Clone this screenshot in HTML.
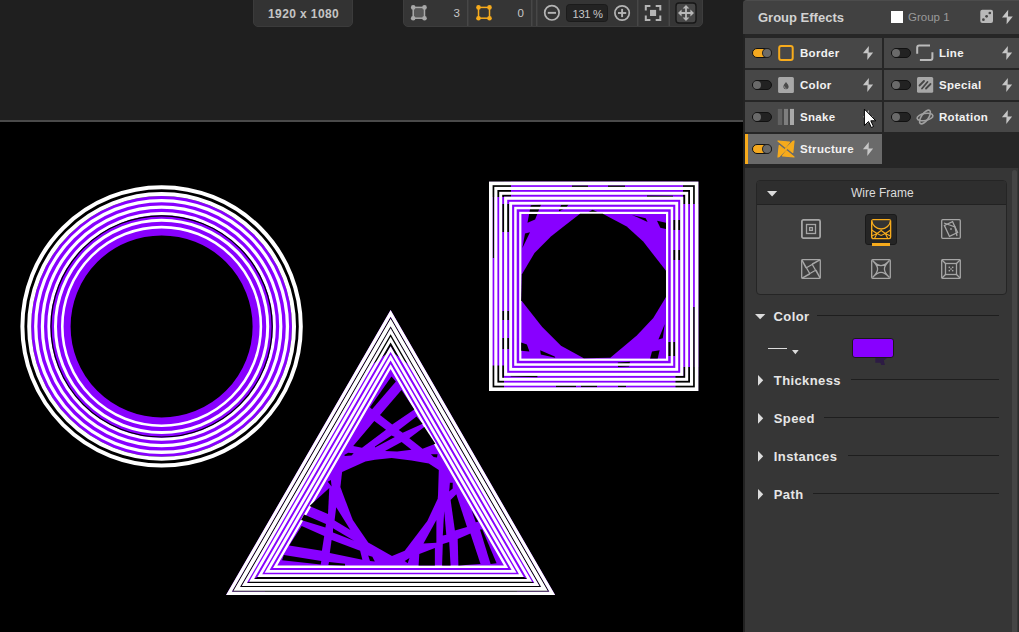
<!DOCTYPE html>
<html><head><meta charset="utf-8">
<style>
*{margin:0;padding:0;box-sizing:border-box}
html,body{width:1019px;height:632px;overflow:hidden;background:#1f1f1f;font-family:"Liberation Sans",sans-serif}
.a{position:absolute}
svg{position:absolute;overflow:visible}
#sep{left:0;top:120px;width:743px;height:2px;background:#4a4a4a}
#pill{left:253px;top:-5px;width:100px;height:32px;background:#333;border-radius:5px;border:1px solid #3b3b3b}
#pill span{position:absolute;left:14px;top:11px;font-size:12px;font-weight:bold;color:#c4c4c4;letter-spacing:0.4px}
#tb{left:403px;top:-5px;width:300px;height:32px;background:#353535;border-radius:5px;border:1px solid #3d3d3d}
.num{position:absolute;font-size:11.5px;color:#c8c8c8;line-height:1}
#lstrip{left:743px;top:0;width:2px;height:632px;background:#222}
#panel{left:745px;top:168px;width:274px;height:464px;background:#363636}
#hdr{left:743px;top:0;width:276px;height:34px;background:#414141;border-top:1px solid #4c4c4c;border-radius:4px 0 0 0}
#hdr .t{position:absolute;left:15px;top:8.7px;font-size:13px;font-weight:bold;color:#d2d2d2}
#hdr .g{position:absolute;left:165px;top:9.5px;font-size:11.5px;color:#9a9a9a}
#grid{left:745px;top:34px;width:274px;height:134px;background:#262626}
.row{position:absolute;height:30px;background:#474747}
.lbl{position:absolute;left:55px;top:8.7px;font-size:11.5px;font-weight:bold;color:#f2f2f2;letter-spacing:0.3px}
.tog{position:absolute;left:7px;top:10px;width:20px;height:10px;border-radius:5px;background:#222;border:1px solid #111}
.tog.on{background:#f5a91f}
.tog i{position:absolute;top:0px;width:8px;height:8px;border-radius:50%;background:#6a6a6a}
.tog.on i{left:10px;box-shadow:0 0 0 1px #222}
.tog.off i{left:0px}
.ic{left:32px;top:6px}
.bolt{left:116px;top:6px}
.sect{position:absolute;left:0;font-size:13px;font-weight:bold;color:#e6e6e6;letter-spacing:0.4px}
.hl{position:absolute;height:1px;background:#1e1e1e}
</style></head><body>
<svg class="a" style="left:0;top:0" width="743" height="632" viewBox="0 0 743 632">
<rect x="0" y="122" width="743" height="510" fill="#000"/>
<circle cx="161.6" cy="326.4" r="110.70" fill="none" stroke="#8800ff" stroke-width="39.40"/>
<circle cx="161.6" cy="326.4" r="139.20" fill="none" stroke="#fff" stroke-width="4.00"/>
<circle cx="161.6" cy="326.4" r="132.40" fill="none" stroke="#fff" stroke-width="4.00"/>
<circle cx="161.6" cy="326.4" r="125.85" fill="none" stroke="#fff" stroke-width="3.30"/>
<circle cx="161.6" cy="326.4" r="119.20" fill="none" stroke="#fff" stroke-width="3.20"/>
<circle cx="161.6" cy="326.4" r="112.80" fill="none" stroke="#fff" stroke-width="3.00"/>
<circle cx="161.6" cy="326.4" r="106.10" fill="none" stroke="#fff" stroke-width="3.00"/>
<circle cx="161.6" cy="326.4" r="99.30" fill="none" stroke="#fff" stroke-width="2.60"/>
<circle cx="161.6" cy="326.4" r="110.6" fill="none" stroke="#000" stroke-width="1.2"/>
<rect x="489.00" y="181.60" width="209.40" height="209.40" fill="#8800ff"/>
<rect x="489" y="181.6" width="22.0" height="15.1" fill="#000"/>
<rect x="489" y="181.6" width="15.0" height="15.4" fill="#000"/>
<rect x="683" y="181.6" width="15.4" height="22.4" fill="#000"/>
<rect x="675.5" y="375.8" width="22.9" height="15.1" fill="#000"/>
<rect x="683.3" y="367" width="15.1" height="23.9" fill="#000"/>
<rect x="489" y="375.8" width="15.0" height="15.1" fill="#000"/>
<rect x="489" y="365.5" width="15.0" height="25.4" fill="#000"/>
<rect x="502.2" y="204" width="7.0" height="28.0" fill="#000"/>
<rect x="502.2" y="311" width="7.0" height="9.0" fill="#000"/>
<rect x="502.2" y="338" width="7.0" height="11.0" fill="#000"/>
<rect x="673.2" y="220" width="7.0" height="10.0" fill="#000"/>
<rect x="673.2" y="250" width="7.0" height="10.0" fill="#000"/>
<rect x="668.2" y="342" width="7.1" height="14.0" fill="#000"/>
<rect x="693.1" y="307" width="1.7" height="68.0" fill="#000"/>
<rect x="492.6" y="182" width="1.7" height="76.0" fill="#000"/>
<polygon fill="#000" points="530.8,205.3 541.1,204.3 535.1,219.5 527.5,222.7"/>
<polygon fill="#000" points="561.2,204.8 568.6,204.3 566.1,207.8 559.3,211.2 558.8,210.7"/>
<polygon fill="#000" points="587.7,212.5 592.6,209.7 598.5,212.5"/>
<polygon fill="#000" points="647.0,195.5 673.0,195.8 673.0,197.5 647.0,197.2"/>
<polygon fill="#000" points="572.0,185.4 588.0,185.4 588.0,187.2 572.0,187.2"/>
<polygon fill="#000" points="608.0,185.4 625.0,185.4 625.0,187.2 608.0,187.2"/>
<polygon fill="#000" points="556.0,385.3 576.0,385.3 576.0,387.2 556.0,387.2"/>
<polygon fill="#000" points="581.0,385.3 597.0,385.3 597.0,387.2 581.0,387.2"/>
<polygon fill="#000" points="618.0,385.3 626.0,385.3 626.0,387.2 618.0,387.2"/>
<polygon fill="#000" points="510.6,374.5 537.4,375.5 537.4,377.2 510.6,376.4"/>
<polygon fill="#000" points="617.8,362.5 630.0,361.8 629.0,366.5 618.0,367.0"/>
<rect x="490.80" y="183.40" width="205.80" height="205.80" fill="none" stroke="#fff" stroke-width="3.60"/>
<rect x="495.85" y="188.45" width="195.70" height="195.70" fill="none" stroke="#fff" stroke-width="3.10"/>
<rect x="500.70" y="193.30" width="186.00" height="186.00" fill="none" stroke="#fff" stroke-width="3.00"/>
<rect x="505.65" y="198.25" width="176.10" height="176.10" fill="none" stroke="#fff" stroke-width="3.10"/>
<rect x="510.65" y="203.25" width="166.10" height="166.10" fill="none" stroke="#fff" stroke-width="2.90"/>
<rect x="515.45" y="208.05" width="156.50" height="156.50" fill="none" stroke="#fff" stroke-width="2.50"/>
<rect x="520.30" y="212.90" width="146.80" height="146.80" fill="none" stroke="#fff" stroke-width="2.20"/>
<polygon fill="#000" points="580.0,213.8 602.7,213.8 626.7,226.5 643.2,241.6 666.0,270.8 666.0,297.0 653.3,317.9 636.8,335.6 610.3,357.8 583.8,358.2 561.0,345.8 542.0,326.8 521.2,300.2 521.8,274.6 534.5,253.0 550.9,236.6 563.6,226.5"/>
<polygon fill="#000" points="525.0,233.4 530.0,232.2 522.4,248.0"/>
<polygon fill="#000" points="631.8,215.0 645.7,218.2 647.6,222.0 636.8,217.0"/>
<polygon fill="#000" points="657.0,220.8 666.0,222.7 666.0,229.0 660.3,227.7"/>
<polygon fill="#000" points="664.7,324.2 658.4,339.4 662.8,338.2"/>
<polygon fill="#000" points="652.0,351.5 659.6,350.2 657.7,358.4 650.1,358.4"/>
<polygon fill="#000" points="521.2,342.6 526.9,344.5 529.4,351.5 521.2,350.8"/>
<polygon fill="#000" points="540.2,350.2 554.7,356.5 555.3,357.8 540.8,354.6"/>
<polygon fill="#8800ff" points="390.60,310.10 555.14,595.10 226.06,595.10"/>
<polygon fill="#000" points="390.60,316.70 549.43,591.80 539.38,586.00 390.60,328.30"/>
<polygon fill="#000" points="390.60,316.70 231.77,591.80 241.82,586.00 390.60,328.30"/>
<polygon fill="#000" points="549.43,591.80 265.00,591.80 265.00,586.00 539.38,586.00"/>
<polygon fill="#000" points="231.77,591.80 517.00,591.80 517.00,586.00 241.82,586.00"/>
<polygon fill="#000" points="390.60,328.30 413.52,368.00 395.05,354.00 390.60,346.30 386.15,354.00 367.68,368.00"/>
<polygon fill="#000" points="539.38,586.00 262.00,586.00 262.00,577.00 523.79,577.00"/>
<polygon fill="#000" points="241.82,586.00 520.00,586.00 520.00,577.00 257.41,577.00"/>
<polygon fill="none" stroke="#fff" stroke-linejoin="miter" stroke-miterlimit="10" stroke-width="3.30" points="390.60,313.40 552.29,593.45 228.91,593.45"/>
<polygon fill="none" stroke="#fff" stroke-linejoin="miter" stroke-miterlimit="10" stroke-width="3.80" points="390.60,322.50 544.41,588.90 236.79,588.90"/>
<polygon fill="none" stroke="#fff" stroke-linejoin="miter" stroke-miterlimit="10" stroke-width="2.90" points="390.60,331.20 536.87,584.55 244.33,584.55"/>
<polygon fill="none" stroke="#fff" stroke-linejoin="miter" stroke-miterlimit="10" stroke-width="2.90" points="390.60,339.60 529.60,580.35 251.60,580.35"/>
<polygon fill="none" stroke="#fff" stroke-linejoin="miter" stroke-miterlimit="10" stroke-width="2.80" points="390.60,349.10 521.37,575.60 259.83,575.60"/>
<polygon fill="none" stroke="#fff" stroke-linejoin="miter" stroke-miterlimit="10" stroke-width="2.90" points="390.60,357.60 514.01,571.35 267.19,571.35"/>
<polygon fill="none" stroke="#fff" stroke-linejoin="miter" stroke-miterlimit="10" stroke-width="2.40" points="390.60,366.70 506.13,566.80 275.07,566.80"/>
<polygon fill="#000" points="342.1,472.1 365.4,461.5 375.0,459.8 391.6,458.1 411.5,460.4 428.8,463.5 438.8,470.0 438.0,495.0 437.7,498.7 427.3,521.1 404.7,550.8 392.0,556.1 368.2,542.5 352.8,519.9 343.3,495.0 340.4,487.0"/>
<polygon fill="#000" points="391.5,376.6 395.9,381.6 372.1,409.3 369.9,407.3"/>
<polygon fill="#000" points="401.5,389.9 414.3,409.4 392.2,424.4 380.0,415.0"/>
<polygon fill="#000" points="374.3,420.9 386.0,429.8 375.0,438.0 362.0,447.7 353.2,446.0"/>
<polygon fill="#000" points="344.3,454.9 348.2,452.7 353.7,453.2 351.5,455.5 344.9,456.0"/>
<polygon fill="#000" points="327.7,481.7 330.9,480.1 331.6,486.5"/>
<polygon fill="#000" points="416.5,416.6 422.6,423.8 402.7,432.7 398.8,429.9"/>
<polygon fill="#000" points="375.0,446.5 391.6,435.4 394.9,437.1 375.0,447.6"/>
<polygon fill="#000" points="409.3,438.2 424.3,427.1 435.4,443.7 422.6,448.7"/>
<polygon fill="#000" points="385.0,450.9 401.6,442.1 411.5,449.8 397.1,451.5"/>
<polygon fill="#000" points="430.9,454.3 437.6,454.3 437.0,457.6 433.7,457.0"/>
<polygon fill="#000" points="449.9,482.8 452.7,482.8 452.7,488.5 449.2,491.4"/>
<polygon fill="#000" points="329.3,488.0 328.0,514.0 309.5,506.0"/>
<polygon fill="#000" points="304.1,514.6 326.0,524.1 325.4,527.6 301.1,519.9"/>
<polygon fill="#000" points="301.7,525.9 324.2,535.9 321.9,550.8 289.2,545.4"/>
<polygon fill="#000" points="283.9,554.9 321.3,560.9 320.7,564.4 282.1,560.3"/>
<polygon fill="#000" points="336.2,507.2 350.4,530.0 334.6,520.5"/>
<polygon fill="#000" points="333.0,528.2 354.1,540.7 333.0,532.5"/>
<polygon fill="#000" points="331.6,540.1 360.1,550.8 362.4,559.7 329.8,553.1"/>
<polygon fill="#000" points="329.0,562.0 345.0,563.8 345.0,565.6 328.4,565.0"/>
<polygon fill="#000" points="368.2,555.5 372.4,556.7 374.8,561.5 370.0,560.9"/>
<polygon fill="#000" points="436.4,519.9 436.4,542.7 423.5,543.4"/>
<polygon fill="#000" points="444.2,511.3 446.3,534.8 442.8,535.6"/>
<polygon fill="#000" points="450.6,500.0 456.3,494.2 467.0,527.0 454.9,530.6"/>
<polygon fill="#000" points="419.3,554.1 434.9,548.1 434.9,565.5 418.6,565.5"/>
<polygon fill="#000" points="442.8,544.1 449.2,542.0 450.6,565.5 442.1,565.5"/>
<polygon fill="#000" points="457.7,539.1 470.4,533.6 480.5,563.9 458.4,565.5"/>
<polygon fill="#000" points="404.7,560.9 409.5,557.9 407.7,563.2"/>
<polygon fill="#000" points="480.0,529.4 482.3,529.4 496.6,563.3 490.6,563.9"/>
<polygon fill="#000" points="471.6,510.4 478.2,521.7 475.8,522.3"/>
</svg>
<div id="sep" class="a"></div>

<div id="pill" class="a"><span>1920 x 1080</span></div>
<div id="tb" class="a"></div>
<svg width="1019" height="40" style="left:0;top:0">
  <!-- icon 1 -->
  <rect x="413.2" y="7.4" width="11.3" height="10.8" fill="#575757" stroke="#a9a9a9" stroke-width="1.5"/>
  <circle cx="413.2" cy="7.4" r="2.3" fill="#a9a9a9"/><circle cx="424.5" cy="7.4" r="2.3" fill="#a9a9a9"/>
  <circle cx="413.2" cy="18.2" r="2.3" fill="#a9a9a9"/><circle cx="424.5" cy="18.2" r="2.3" fill="#a9a9a9"/>
  <rect x="467" y="0" width="1.5" height="26" fill="#474747"/>
  <!-- icon 2 orange -->
  <rect x="478.5" y="7.4" width="11" height="10.8" fill="none" stroke="#f7ab1c" stroke-width="1.5"/>
  <circle cx="478.5" cy="7.4" r="2.3" fill="#f7ab1c"/><circle cx="489.5" cy="7.4" r="2.3" fill="#f7ab1c"/>
  <circle cx="478.5" cy="18.2" r="2.3" fill="#f7ab1c"/><circle cx="489.5" cy="18.2" r="2.3" fill="#f7ab1c"/>
  <rect x="531" y="0" width="1.5" height="26" fill="#474747"/>
  <rect x="536" y="0" width="1.5" height="26" fill="#474747"/>
  <!-- minus -->
  <circle cx="551.9" cy="12.8" r="7.2" fill="none" stroke="#b5b5b5" stroke-width="1.7"/>
  <rect x="547.8" y="11.9" width="8.2" height="1.9" fill="#b5b5b5"/>
  <rect x="566.5" y="4.5" width="41" height="17" rx="3" fill="#232323" stroke="#1b1b1b" stroke-width="1"/>
  <!-- plus -->
  <circle cx="622.1" cy="13" r="7.2" fill="none" stroke="#b5b5b5" stroke-width="1.7"/>
  <rect x="618" y="12.05" width="8.2" height="1.9" fill="#b5b5b5"/>
  <rect x="621.15" y="8.9" width="1.9" height="8.2" fill="#b5b5b5"/>
  <rect x="637" y="0" width="1.5" height="26" fill="#474747"/>
  <!-- fit -->
  <path d="M645.8 10.5V5.9H650.4 M655.7 5.9H660.3V10.5 M660.3 15.4V20H655.7 M650.4 20H645.8V15.4" fill="none" stroke="#b5b5b5" stroke-width="2"/>
  <rect x="650" y="9.9" width="6.1" height="6.1" fill="#b5b5b5"/>
  <rect x="668.5" y="0" width="1.5" height="26" fill="#474747"/>
  <!-- move -->
  <rect x="676" y="3" width="20" height="20" rx="3" fill="#474747" stroke="#171717" stroke-width="1.4"/>
  <path d="M686 6.5V19.5 M679.5 13H692.5" stroke="#b8b8b8" stroke-width="1.8"/>
  <path d="M686 5L682.6 8.6H689.4Z M686 21L682.6 17.4H689.4Z M678 13L681.6 9.6V16.4Z M694 13L690.4 9.6V16.4Z" fill="#b8b8b8"/>
</svg>
<span class="num" style="left:453.5px;top:8px">3</span>
<span class="num" style="left:517.5px;top:8px">0</span>
<span class="num" style="left:572.5px;top:8.5px;font-size:11.2px;letter-spacing:-0.3px">131 %</span>

<div id="lstrip" class="a"></div>
<div id="panel" class="a"></div>
<div id="grid" class="a">
  <div class="row" style="left:0;top:4px;width:137px">
    <div class="tog on"><i></i></div>
    <svg class="ic" width="18" height="18"><rect x="2.2" y="1.9" width="13.5" height="14" rx="2" fill="none" stroke="#f7ab1c" stroke-width="2"/></svg>
    <span class="lbl">Border</span>
    <svg class="bolt" width="14" height="18"><path d="M7.85 1.94L1.9 9.26H6.47L6.27 15.98L12.12 8.47H7.65Z" fill="#c6c6c6"/></svg>
  </div>
  <div class="row" style="left:139px;top:4px;width:135px">
    <div class="tog off"><i></i></div>
    <svg class="ic" width="18" height="18"><path d="M1.2 9.7V3.4Q1.2 1.4 3.2 1.4H14 M16.4 8.3V13.9Q16.4 15.9 14.4 15.9H3.9" fill="none" stroke="#bbb" stroke-width="2"/></svg>
    <span class="lbl">Line</span>
    <svg class="bolt" width="14" height="18"><path d="M7.85 1.94L1.9 9.26H6.47L6.27 15.98L12.12 8.47H7.65Z" fill="#c6c6c6"/></svg>
  </div>
  <div class="row" style="left:0;top:36px;width:137px">
    <div class="tog off"><i></i></div>
    <svg class="ic" width="18" height="18"><rect x="1.1" y="1.1" width="15.8" height="15.8" rx="1.5" fill="#a8a8a8"/><path d="M9 6C10.2 7.7 11.6 9 11.6 10.6A2.6 2.6 0 0 1 6.4 10.6C6.4 9 7.8 7.7 9 6Z" fill="#4a4a4a"/><path d="M7.4 10.4A1.7 1.7 0 0 0 9.4 12.3" fill="none" stroke="#a8a8a8" stroke-width="0.8"/></svg>
    <span class="lbl">Color</span>
    <svg class="bolt" width="14" height="18"><path d="M7.85 1.94L1.9 9.26H6.47L6.27 15.98L12.12 8.47H7.65Z" fill="#c6c6c6"/></svg>
  </div>
  <div class="row" style="left:139px;top:36px;width:135px">
    <div class="tog off"><i></i></div>
    <svg class="ic" width="18" height="18"><rect x="1" y="1.1" width="16.2" height="15.7" rx="1.5" fill="#a8a8a8"/><path d="M3.5 9.5L8 5 M6 12.5L11.5 6 M10 12.5L14.5 8" stroke="#454545" stroke-width="1.8" stroke-linecap="round"/></svg>
    <span class="lbl">Special</span>
    <svg class="bolt" width="14" height="18"><path d="M7.85 1.94L1.9 9.26H6.47L6.27 15.98L12.12 8.47H7.65Z" fill="#c6c6c6"/></svg>
  </div>
  <div class="row" style="left:0;top:68px;width:137px">
    <div class="tog off"><i></i></div>
    <svg class="ic" width="18" height="18"><rect x="0.8" y="0.9" width="4.3" height="16.1" fill="#626262"/><rect x="7" y="0.9" width="4" height="16.1" fill="#7e7e7e"/><rect x="13" y="0.9" width="4" height="16.1" fill="#a9a9a9"/></svg>
    <span class="lbl">Snake</span>
    <svg class="bolt" width="14" height="18"><path d="M7.85 1.94L1.9 9.26H6.47L6.27 15.98L12.12 8.47H7.65Z" fill="#c6c6c6"/></svg>
  </div>
  <div class="row" style="left:139px;top:68px;width:135px">
    <div class="tog off"><i></i></div>
    <svg class="ic" width="18" height="18"><ellipse cx="9" cy="9" rx="3.5" ry="8" transform="rotate(35 9 9)" fill="none" stroke="#a0a0a0" stroke-width="1.6"/><ellipse cx="9" cy="9" rx="8" ry="3.5" transform="rotate(-10 9 9)" fill="none" stroke="#a0a0a0" stroke-width="1.6"/></svg>
    <span class="lbl">Rotation</span>
    <svg class="bolt" width="14" height="18"><path d="M7.85 1.94L1.9 9.26H6.47L6.27 15.98L12.12 8.47H7.65Z" fill="#c6c6c6"/></svg>
  </div>
  <div class="row" style="left:0;top:100px;width:137px;background:#6a6a6a">
    <div class="tog on"><i></i></div>
    <div style="position:absolute;left:0;top:0;width:3px;height:30px;background:#f7ab1c"></div>
    <svg class="ic" width="18" height="18"><path d="M1 1L12.5 2.2L8.6 7.2Z M17 1L15.8 12.5L10.8 8.6Z M17 17L5.5 15.8L9.4 10.8Z M1 17L2.2 5.5L7.2 9.4Z" fill="#f7ab1c" stroke="#f7ab1c" stroke-width="1.2" stroke-linejoin="round"/><path d="M1.5 16.5L16.5 1.5" stroke="#f7ab1c" stroke-width="2.2"/></svg>
    <span class="lbl">Structure</span>
    <svg class="bolt" width="14" height="18"><path d="M7.85 1.94L1.9 9.26H6.47L6.27 15.98L12.12 8.47H7.65Z" fill="#c6c6c6"/></svg>
  </div>
</div>
<div id="hdr" class="a">
  <span class="t">Group Effects</span>
  <div style="position:absolute;left:148px;top:10px;width:12px;height:12px;background:#fff"></div>
  <span class="g">Group 1</span>
  <svg width="14" height="14" style="left:237px;top:8.2px"><rect x="0.3" y="0.8" width="12.7" height="13.1" rx="2" fill="#b9b9b9"/><circle cx="3.4" cy="10.7" r="1.35" fill="#454545"/><circle cx="6.6" cy="7.3" r="1.35" fill="#454545"/><circle cx="9.8" cy="4" r="1.35" fill="#454545"/></svg>
  <svg width="14" height="18" style="left:256.5px;top:7px"><path d="M8.2 1.8L2 9.5H6.8L6.6 16.3L12.8 8.5H8Z" fill="#c6c6c6"/></svg>
</div>

<!-- cursor -->
<svg width="14" height="20" style="left:860px;top:105px"><path d="M4.4 4.1V20.5L8.5 16.5L11.3 22.5L13.5 21.5L10.8 15.8H15.8Z" fill="#fff" stroke="#000" stroke-width="1" transform="translate(0 0)"/></svg>

<!-- lower panel -->
<div class="a" style="left:755.5px;top:179.5px;width:251px;height:115px;background:#3e3e3e;border:1px solid #252525;border-radius:4px;overflow:hidden">
  <div style="position:absolute;left:0;top:0;width:250px;height:24px;background:#2e2e2e;border-bottom:1.5px solid #222"></div>
  <svg width="12" height="8" style="left:10px;top:10.5px"><path d="M0 0H10.2L5.1 5.4Z" fill="#dcdcdc"/></svg>
  <span style="position:absolute;left:94.5px;top:5px;font-size:12px;color:#dcdcdc">Wire Frame</span>
  <svg width="20" height="20" style="left:44.7px;top:38.5px"><rect x="0.9" y="0.9" width="18.2" height="18.2" rx="1.5" fill="none" stroke="#a6a6a6" stroke-width="1.8"/><rect x="5.5" y="5.5" width="9" height="9" fill="none" stroke="#a6a6a6" stroke-width="1.3"/><rect x="8.6" y="8.6" width="2.8" height="2.8" fill="none" stroke="#a6a6a6" stroke-width="1.3"/></svg>
  <div style="position:absolute;left:108.6px;top:33.5px;width:31.6px;height:30.5px;background:#252525;border-radius:3px;border:1px solid #1a1a1a"></div>
  <div style="position:absolute;left:115.5px;top:62.4px;width:17.8px;height:3px;background:#f7ab1c"></div>
  <svg width="21" height="21" style="left:114.2px;top:38.5px"><rect x="0.7" y="0.7" width="18.9" height="18.9" rx="1.5" fill="none" stroke="#f7ab1c" stroke-width="1.4"/><path d="M0.7 1.5A9.5 9.5 0 0 0 19.6 1.5" fill="#333" stroke="#f7ab1c" stroke-width="1.4"/><path d="M0.7 11L6 14.5L10.15 11.5L14.3 14.5L19.6 11 M0.7 17L6 14.5L10.15 16.5L14.3 14.5L19.6 17 M3.5 19.6L6 14.5 M16.8 19.6L14.3 14.5" fill="none" stroke="#f7ab1c" stroke-width="1.1"/></svg>
  <svg width="20" height="20" style="left:184.5px;top:38.5px"><rect x="0.7" y="0.7" width="18.6" height="18.6" rx="1" fill="none" stroke="#a6a6a6" stroke-width="1.3"/><rect x="5.5" y="4" width="9" height="12" transform="rotate(-25 10 10)" fill="none" stroke="#a6a6a6" stroke-width="1.3"/><path d="M3 4L14 8L16 17" fill="none" stroke="#a6a6a6" stroke-width="1.3"/><rect x="9.2" y="9.2" width="1.6" height="1.6" fill="#a6a6a6"/></svg>
  <svg width="20" height="20" style="left:44.7px;top:78.5px"><rect x="0.7" y="0.7" width="18.6" height="18.6" rx="1" fill="none" stroke="#a6a6a6" stroke-width="1.3"/><path d="M0.7 0.7L5 9 M19.3 0.7L11 5 M19.3 19.3L15 11 M0.7 19.3L9 15 M5 9L19.3 0.7 M11 5L19.3 19.3 M15 11L0.7 19.3 M9 15L0.7 0.7" fill="none" stroke="#a6a6a6" stroke-width="1.3"/></svg>
  <svg width="20" height="20" style="left:114.2px;top:78.5px"><rect x="0.7" y="0.7" width="18.6" height="18.6" rx="1" fill="none" stroke="#a6a6a6" stroke-width="1.3"/><path d="M1.5 1.5C6 6.2 8.5 6.6 10 6.6C11.5 6.6 14 6.2 18.5 1.5C13.8 6 13.4 8.5 13.4 10C13.4 11.5 13.8 14 18.5 18.5C14 13.8 11.5 13.4 10 13.4C8.5 13.4 6 13.8 1.5 18.5C6.2 14 6.6 11.5 6.6 10C6.6 8.5 6.2 6 1.5 1.5Z" fill="none" stroke="#a6a6a6" stroke-width="1.3"/></svg>
  <svg width="20" height="20" style="left:184.5px;top:78.5px"><rect x="0.7" y="0.7" width="18.6" height="18.6" rx="1" fill="none" stroke="#a6a6a6" stroke-width="1.3"/><rect x="4.5" y="4.5" width="11" height="11" fill="none" stroke="#a6a6a6" stroke-width="1.3"/><path d="M0.7 0.7L4.5 4.5 M19.3 0.7L15.5 4.5 M19.3 19.3L15.5 15.5 M0.7 19.3L4.5 15.5" fill="none" stroke="#a6a6a6" stroke-width="1.3"/><rect x="7.6" y="7.6" width="1.5" height="1.5" fill="#a6a6a6"/><rect x="10.9" y="7.6" width="1.5" height="1.5" fill="#a6a6a6"/><rect x="9.25" y="9.25" width="1.5" height="1.5" fill="#a6a6a6"/><rect x="7.6" y="10.9" width="1.5" height="1.5" fill="#a6a6a6"/><rect x="10.9" y="10.9" width="1.5" height="1.5" fill="#a6a6a6"/></svg>
</div>
<div class="a" style="left:1012.2px;top:170.3px;width:5.3px;height:470px;background:#454545;border-radius:3px"></div>
<div class="a" style="left:1017.5px;top:168px;width:1.5px;height:464px;background:#2c2c2c"></div>

<svg width="12" height="8" style="left:754.7px;top:313.9px"><path d="M0 0H10.3L5.15 5.3Z" fill="#dcdcdc"/></svg>
<span class="sect" style="left:773.5px;top:309px">Color</span>
<div class="hl" style="left:817px;top:315px;width:182px"></div>
<div class="a" style="left:767.8px;top:348.2px;width:19.2px;height:1.2px;background:#dcdcdc"></div>
<svg width="8" height="6" style="left:791.7px;top:349.8px"><path d="M0 0H6.7L3.35 4.2Z" fill="#dcdcdc"/></svg>
<div class="a" style="left:852px;top:338.4px;width:41.7px;height:19.6px;background:#8800ff;border:1px solid #1a1a1a;border-radius:3px"></div>

<svg width="20" height="10" style="left:870px;top:355px"><path d="M5.3 3.1H17L13.8 5.6L14.9 9.9H11.3L10.3 7.8H5.3Z" fill="#2d1b44"/></svg>
<svg width="8" height="12" style="left:757.8px;top:375px"><path d="M0 0V10.7L5.2 5.35Z" fill="#dcdcdc"/></svg>
<span class="sect" style="left:773.8px;top:373px">Thickness</span>
<div class="hl" style="left:851px;top:379px;width:148px"></div>

<svg width="8" height="12" style="left:757.8px;top:413px"><path d="M0 0V10.7L5.2 5.35Z" fill="#dcdcdc"/></svg>
<span class="sect" style="left:773.8px;top:411px">Speed</span>
<div class="hl" style="left:824px;top:417px;width:175px"></div>

<svg width="8" height="12" style="left:757.8px;top:451px"><path d="M0 0V10.7L5.2 5.35Z" fill="#dcdcdc"/></svg>
<span class="sect" style="left:773.8px;top:449px">Instances</span>
<div class="hl" style="left:848px;top:455px;width:151px"></div>

<svg width="8" height="12" style="left:757.8px;top:489px"><path d="M0 0V10.7L5.2 5.35Z" fill="#dcdcdc"/></svg>
<span class="sect" style="left:773.8px;top:487px">Path</span>
<div class="hl" style="left:813px;top:493px;width:186px"></div>

</body></html>
